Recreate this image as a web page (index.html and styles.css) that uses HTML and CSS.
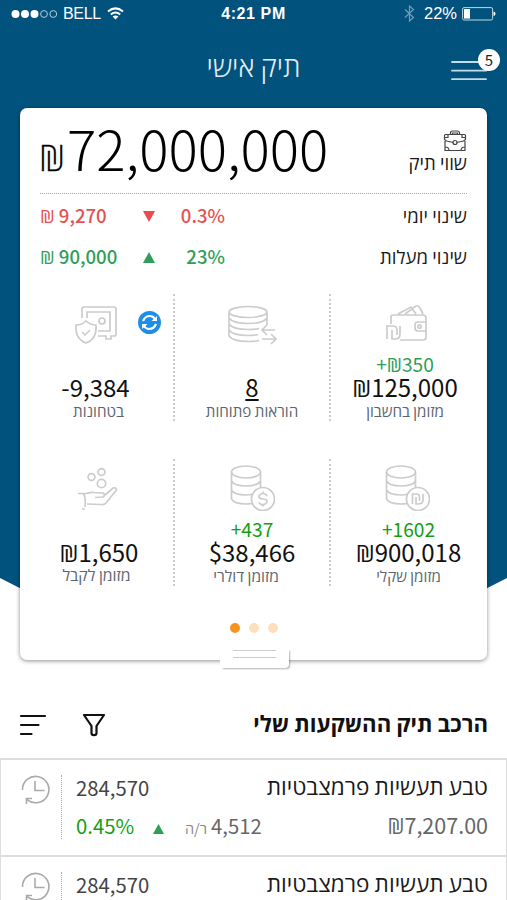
FILE: index.html
```html
<!DOCTYPE html>
<html lang="he" dir="rtl">
<head>
    <meta charset="UTF-8">
    <meta name="viewport" content="width=device-width, initial-scale=1.0">
    <title>תיק אישי</title>
    <link rel="stylesheet" href="styles.css">
</head>
<body>
    <div class="top">
        <div class="status" dir="ltr">
            <div class="status-left">
                <svg width="47" height="10" viewBox="0 0 47 10">
                    <g fill="#fff"><circle cx="4.5" cy="5" r="4"/><circle cx="14" cy="5" r="4"/><circle cx="23.500" cy="5" r="4"/></g>
                    <g fill="none" stroke="#b5cddb"><circle cx="33" cy="5" r="3.400"/><circle cx="42.300" cy="5" r="3.400"/></g>
                </svg>
                <span class="carrier">BELL</span>
                <svg width="17" height="13" viewBox="0 0 17 13" fill="none" stroke="#fff" stroke-width="2">
                    <path d="M1 4.600Q8.500-1.800 16 4.600M3.800 7.600Q8.500 3.500 13.200 7.600"/>
                    <path d="M5.600 9.500Q8.500 7.300 11.400 9.500L8.500 12.600z" fill="#fff" stroke="none"/>
                </svg>
            </div>
            <div class="clock">4:21 PM</div>
            <div class="status-right">
                <svg width="11" height="17" viewBox="0 0 11 17" fill="none" stroke="#6d9db8" stroke-width="1.200">
                    <path d="M1 4.500l8.500 8L5.500 16V1l4 3.500-8.500 8"/>
                </svg>
                <span class="percent">22%</span>
                <svg width="34" height="14" viewBox="0 0 34 14">
                    <rect x=".6" y=".6" width="30" height="12.400" rx="1.500" fill="none" stroke="#c3d6e1"/>
                    <rect x="2" y="2" width="6" height="9.600" fill="#fff"/>
                    <path d="M31.500 4.500q2 .5 2 2.300t-2 2.300z" fill="#fff"/>
                </svg>
            </div>
        </div>

        <div class="header">
            <h1>תיק אישי</h1>
            <button class="menu">
                <svg width="36" height="22" viewBox="0 0 36 22" stroke="#c5dbe7" stroke-width="1.800" stroke-linecap="round">
                    <path d="M1 2h34M1 10.700h34M1 19.200h34"/>
                </svg>
                <span class="badge">5</span>
            </button>
        </div>

        <div class="card">
            <div class="total">
                <div class="total-label">
                    <svg width="24" height="22" viewBox="0 0 24 22" fill="none" stroke="#444" stroke-width="1.200">
                        <path d="M7.500 4.500V3q0-2 2-2h5q2 0 2 2v1.500M9.500 4.500V3h5v1.500"/>
                        <path d="M2.500 4.500h19q1 0 1 1v4l-2 1.500-7 1.500h-3L3.500 11 1.500 9.500v-4q0-1 1-1zM2 11v9.500h20V11M2 17q4 0 4 3.500M22 17q-4 0-4 3.500M5 4.500v3H2M19 4.500v3h3"/>
                        <circle cx="12" cy="12.500" r="2" fill="#fff"/>
                    </svg>
                    <span>שווי תיק</span>
                </div>
                <div class="total-value" dir="ltr"><span class="shekel">₪</span>72,000,000</div>
            </div>

            <div class="change">
                <span class="change-label">שינוי יומי</span>
                <span class="change-percent down" dir="ltr">0.3%</span>
                <svg class="arrow" width="12" height="11" viewBox="0 0 12 11"><path d="M0 0h12L6 11z" fill="#eb4b4b"/></svg>
                <span class="change-sum down" dir="ltr">₪ 9,270</span>
            </div>
            <div class="change">
                <span class="change-label">שינוי מעלות</span>
                <span class="change-percent up" dir="ltr">23%</span>
                <svg class="arrow" width="12" height="11" viewBox="0 0 12 11"><path d="M0 11h12L6 0z" fill="#2f9e58"/></svg>
                <span class="change-sum up" dir="ltr">₪ 90,000</span>
            </div>

            <div class="tiles">
                <div class="tile">
                    <svg class="icon" width="46" height="46" viewBox="0 0 46 46">
                        <path d="M7 17V13q0-2 2-2h30q3 0 3 3v4M42 27v6q0 3-3 3H16M7 17v3M14 10l13-7 5 7M21 10l11-8q2-1 4 2l3 6M42 18h-8q-3 0-3 3v3q0 3 3 3h8z"/>
                        <circle cx="35.500" cy="22.500" r="1.700"/>
                        <path d="M3 35V22h6q4 0 4 4v5M8 26v9h3q5 0 5-5v-8"/>
                    </svg>
                    <span class="delta up" dir="ltr">+₪350</span>
                    <span class="sum" dir="ltr">₪125,000</span>
                    <span class="caption">מזומן בחשבון</span>
                </div>
                <div class="tile">
                    <svg class="icon" width="50" height="46" viewBox="0 0 50 46">
                        <ellipse cx="21" cy="8" rx="19" ry="5.500"/>
                        <path d="M2 8v24q4 5.500 19 5.500 7 0 11-1M40 8v13M2 14q4 5.500 19 5.500T40 14M2 20q4 5.500 19 5.500 8 0 11-1M2 26q4 5.500 19 5.500 6 0 10-1"/>
                        <path d="M48 26H35M40 21l-5 5 5 5M35 35h14M44 30l5 5-5 5"/>
                    </svg>
                    <span class="delta"></span>
                    <span class="sum"><u>8</u></span>
                    <span class="caption">הוראות פתוחות</span>
                </div>
                <div class="tile">
                    <svg class="icon" width="46" height="46" viewBox="0 0 46 46">
                        <path d="M9 14V5q0-2 2-2h30q2 0 2 2v25q0 2-2 2h-3v3h-5v-3h-8M14 14V8h23v19H25"/>
                        <circle cx="29" cy="17" r="3"/>
                        <path d="M13 17q4 4 10 4 1 14-10 18Q2 35 3 21q6 0 10-4zM9 28l3 3 5-5"/>
                    </svg>
                    <span class="refresh">
                        <svg width="23" height="23" viewBox="0 0 23 23" fill="none" stroke="#fff" stroke-width="2.200">
                            <path d="M5 10q2-5 7-5 3 0 5 3M18 13q-2 5-7 5-3 0-5-3"/>
                            <path d="M19 5v5h-5.500zM4 18v-5h5.500z" fill="#fff" stroke="none"/>
                        </svg>
                    </span>
                    <span class="delta"></span>
                    <span class="sum" dir="ltr">-9,384</span>
                    <span class="caption caption-deposit">בטחונות</span>
                </div>
                <div class="tile second">
                    <svg class="icon" width="46" height="46" viewBox="0 0 46 46">
                        <ellipse cx="17" cy="7" rx="14.500" ry="6"/>
                        <path d="M2.500 7v27q3 5 14.500 5 3 0 6-.5M31.500 7v16M2.500 16q3 5 14.500 5t14.500-5M2.500 25q3 5 14.500 5 4 0 7-1"/>
                        <circle cx="34" cy="34" r="11.500"/>
                        <path d="M28.500 39V29h4q3 0 3 3v4M32 32v7h2q5 0 5-4v-6"/>
                    </svg>
                    <span class="delta bright" dir="ltr">+1602</span>
                    <span class="sum" dir="ltr">₪900,018</span>
                    <span class="caption">מזומן שקלי</span>
                </div>
                <div class="tile second">
                    <svg class="icon" width="46" height="46" viewBox="0 0 46 46">
                        <ellipse cx="17" cy="7" rx="14.500" ry="6"/>
                        <path d="M2.500 7v27q3 5 14.500 5 3 0 6-.5M31.500 7v16M2.500 16q3 5 14.500 5t14.500-5M2.500 25q3 5 14.500 5 4 0 7-1"/>
                        <circle cx="34" cy="34" r="11.500"/>
                        <path d="M38 31q-1-2.500-4-2.500t-4 2.500 4 3 4 3-4 2.700-4-2.500M34 26.500v2M34 39.500v2"/>
                    </svg>
                    <span class="delta bright" dir="ltr">+437</span>
                    <span class="sum" dir="ltr">$38,466</span>
                    <span class="caption caption-dollar">מזומן דולרי</span>
                </div>
                <div class="tile second">
                    <svg class="icon" width="46" height="46" viewBox="0 0 46 46">
                        <circle cx="15.500" cy="12" r="3.400"/><circle cx="25.500" cy="7" r="3.400"/><circle cx="25.500" cy="18.500" r="4.200"/>
                        <path d="M2 28.500h5.500q2.500 5 1.500 13.500M8 29q6-2 10-1.500l9 .5q3 2 0 4l-8 .5M29 30l8-7q3-1 3.500 2L30 38q-2 2-5 1.500L11 39M6 44h3"/>
                    </svg>
                    <span class="delta"></span>
                    <span class="sum" dir="ltr">₪1,650</span>
                    <span class="caption caption-receive">מזומן לקבל</span>
                </div>
            </div>

            <div class="dots" dir="ltr">
                <i class="dot active"></i><i class="dot"></i><i class="dot"></i>
            </div>
            <div class="handle"></div>
        </div>
    </div>

    <div class="list-head">
        <h2>הרכב תיק ההשקעות שלי</h2>
        <svg class="filter" width="24" height="24" viewBox="0 0 24 24" fill="none" stroke="#111" stroke-width="2.200" stroke-linejoin="round">
            <path d="M2 2h20l-7.500 11v7q0 2.200-2.500 2.200T9.500 20v-7z"/>
        </svg>
        <svg width="28" height="24" viewBox="0 0 28 24" stroke="#111" stroke-width="2.200" stroke-linecap="round">
            <path d="M2 3h24M2 12h17.500M2 21h10.500"/>
        </svg>
    </div>

    <div class="row">
        <div class="row-name">
            <span class="name">טבע תעשיות פרמצבטיות</span>
            <span class="price" dir="ltr">₪7,207.00</span>
        </div>
        <div class="row-data" dir="ltr">
            <span class="amount">284,570</span>
            <div class="row-change">
                <span class="rate">0.45%</span>
                <svg width="11" height="10" viewBox="0 0 11 10"><path d="M0 10h11L5.500 0z" fill="#2f9e58"/></svg>
                <span class="unit">ר/ה</span>
                <span class="profit">4,512</span>
            </div>
        </div>
        <div class="history">
            <svg width="30" height="30" viewBox="0 0 30 30" fill="none" stroke="#aaa" stroke-width="1.600">
                <path d="M1.500 15A13.200 13.200 0 1 1 6 24.500M5.500 29v-5.500H11M14 6v9.500h9.500"/>
            </svg>
        </div>
    </div>
    <div class="row">
        <div class="row-name">
            <span class="name">טבע תעשיות פרמצבטיות</span>
        </div>
        <div class="row-data" dir="ltr">
            <span class="amount">284,570</span>
        </div>
        <div class="history">
            <svg width="30" height="30" viewBox="0 0 30 30" fill="none" stroke="#aaa" stroke-width="1.600">
                <path d="M1.500 15A13.200 13.200 0 1 1 6 24.500M5.500 29v-5.500H11M14 6v9.500h9.500"/>
            </svg>
        </div>
    </div>
</body>
</html>
```
FILE: styles.css
```css
* {
    box-sizing: border-box;
}

body {
    margin: 0;
    height: 900px;
    overflow: hidden;
    background-color: #fff;
    color: #1a1a1a;
    font-family: "Noto Sans CJK SC", "Open Sans", "Noto Sans", sans-serif;
}

svg {
    display: block;
    flex-shrink: 0;
}

.top {
    position: relative;
    z-index: 0;
    height: 690px;
}

/* blue background with cut corners */
.top::before {
    content: "";
    position: absolute;
    z-index: -1;
    inset: 0 0 50px;
    background-color: #02527e;
    clip-path: polygon(0 0, 100% 0, 100% 578px, 385px 100%, 122px 100%, 0 578px);
}

/* status bar */
.status {
    display: grid;
    grid-template-columns: 1fr auto 1fr;
    align-items: center;
    height: 27px;
    padding: 0 11px;
    color: #fff;
    font-family: "Liberation Sans", Arial, sans-serif;
    font-size: 16.5px;
}

.status-left,
.status-right {
    display: flex;
    align-items: center;
}

.carrier {
    margin: 0 6px 0 5px;
    font-size: 16px;
    letter-spacing: -0.3px;
}

.clock {
    font-weight: bold;
    font-size: 16px;
    letter-spacing: 0.6px;
}

.status-right {
    justify-content: flex-end;
}

.percent {
    margin: 0 5px 0 9px;
}

/* header */
.header {
    display: grid;
    grid-template-columns: 1fr auto 1fr;
    direction: ltr;
    align-items: center;
    height: 81px;
}

.header h1 {
    grid-column: 2;
    margin: 0 0 5px;
    color: #e3edf3;
    font-size: 28px;
    font-weight: 300;
    line-height: 40px;
}

.menu {
    position: relative;
    justify-self: end;
    margin: 7px 20px 0 0;
    padding: 0;
    border: 0;
    background: none;
}

.badge {
    position: absolute;
    top: -11px;
    right: -13px;
    width: 22px;
    height: 22px;
    border-radius: 50%;
    background-color: #fff;
    color: #222;
    font: 15px/21px "Noto Sans CJK SC", sans-serif;
    text-align: center;
}

/* card */
.card {
    position: relative;
    width: 467px;
    height: 552px;
    margin: 0 auto;
    padding: 0 20px;
    border-radius: 7px;
    background-color: #fff;
    box-shadow: 0 1px 4px rgba(0, 0, 0, 0.45);
}

.total {
    display: flex;
    justify-content: space-between;
    height: 86px;
    border-bottom: 1px dotted #aaa;
}

.total-label {
    display: flex;
    flex-direction: column;
    align-items: flex-start;
    padding-top: 22px;
    font-size: 18.6px;
    line-height: 20px;
}

.total-value {
    color: #000;
    font-size: 54.7px;
    font-weight: 300;
    line-height: 80px;
}

.shekel {
    margin: 0 2px 0 -1px;
    font-size: 36px;
    -webkit-text-stroke: 0.3px #000;
}

.change {
    display: grid;
    grid-template-columns: 242px 60px 33px 1fr;
    align-items: center;
    height: 41px;
    font-size: 18.6px;
    line-height: 30px;
}

.change-percent {
    text-align: right;
    font-weight: 500;
}

.arrow {
    justify-self: center;
    margin-top: 4px;
}

.change-sum {
    text-align: left;
    font-weight: 500;
}

.down {
    color: #e8504f;
}

.up {
    color: #2f9e58;
}

.bright {
    color: #12a012;
}

.tiles {
    display: grid;
    grid-template-columns: 138px 156px 133px;
    row-gap: 38px;
    padding-top: 18px;
}

.tile {
    display: flex;
    flex-direction: column;
    align-items: center;
    height: 127px;
    white-space: nowrap;
}

.tile:nth-child(3n + 1) {
    padding-left: 12px;
}

.tile:nth-child(3n) {
    position: relative;
    padding-right: 22px;
}

.tile:nth-child(4) {
    padding-left: 19px;
}

.tile:nth-child(6) {
    padding-right: 15px;
}

.tile:not(:nth-child(3n)) {
    border-left: 2px dotted #ccc;
}

.icon {
    height: 56px;
    padding-top: 10px;
    fill: none;
    stroke: #ccc;
    stroke-width: 1.7;
}

.tile:nth-child(1) .icon {
    margin-left: 3px;
}

.tile:nth-child(4) .icon {
    margin-right: 3px;
}

.second .icon {
    height: 52px;
    margin-bottom: 4px;
    padding-top: 6px;
}

.refresh {
    position: absolute;
    top: 17px;
    left: 98px;
    border-radius: 50%;
    background-color: #1d8eea;
}

.delta {
    height: 24px;
    padding-top: 1px;
    font-size: 19.2px;
    line-height: 26px;
}

.sum {
    height: 26px;
    color: #111;
    font-size: 24px;
    line-height: 26px;
}

.caption {
    color: #5d6670;
    font-size: 15.2px;
    line-height: 20px;
}

.caption-dollar {
    padding-right: 12px;
    font-size: 15.6px;
}

.caption-deposit {
    padding-left: 6px;
}

.caption-receive {
    padding-right: 5px;
    font-size: 15.8px;
}

.dots {
    display: flex;
    justify-content: center;
    gap: 9px;
    padding-top: 37px;
}

.dot {
    width: 10px;
    height: 10px;
    border-radius: 50%;
    background-color: #fde0bb;
}

.dot.active {
    background-color: #f7941e;
}

.handle {
    position: absolute;
    left: 200px;
    bottom: -8px;
    width: 69px;
    height: 20px;
    border-radius: 0 0 4px 0;
    background-color: #fff;
    box-shadow: 2px 2px 2px -1px rgba(0, 0, 0, 0.3);
}

.handle::before {
    content: "";
    display: block;
    width: 43px;
    height: 6px;
    margin: 2px auto 0;
    border: solid #ccc;
    border-width: 1px 0;
}

/* investments list */
.list-head {
    display: flex;
    align-items: center;
    height: 68px;
    padding: 2px 19px 0;
}

.list-head h2 {
    margin: 0 0 7px auto;
    color: #111;
    font-size: 22.2px;
    font-weight: 700;
    line-height: 34px;
}

.filter {
    margin-left: 35px;
}

.row {
    display: flex;
    height: 97px;
    padding: 15px 18px 0 20px;
    border: 1px solid #ddd;
    border-top-width: 2px;
    border-bottom: 0;
}

.row-name {
    display: flex;
    flex-direction: column;
    margin: -1px 0 0 auto;
    font-size: 21.5px;
}

.name,
.price,
.amount,
.row-change {
    flex-shrink: 0;
    height: 39px;
    line-height: 24px;
}

.name {
    font-size: 22.6px;
}

.price {
    color: #666;
    text-align: right;
}

.row-data {
    display: flex;
    flex-direction: column;
    width: 201px;
    height: 64px;
    padding-left: 14px;
    border-left: 1px dotted #aaa;
    font-size: 20.3px;
}

.amount {
    height: 38px;
    color: #444;
}

.row-change {
    display: flex;
    align-items: baseline;
}

.rate {
    width: 77px;
    color: #12a012;
}

.unit {
    margin: 0 4px 0 21px;
    color: #888;
    font-size: 14.5px;
}

.profit {
    color: #666;
}

.history {
    width: 40px;
    direction: ltr;
}
```
